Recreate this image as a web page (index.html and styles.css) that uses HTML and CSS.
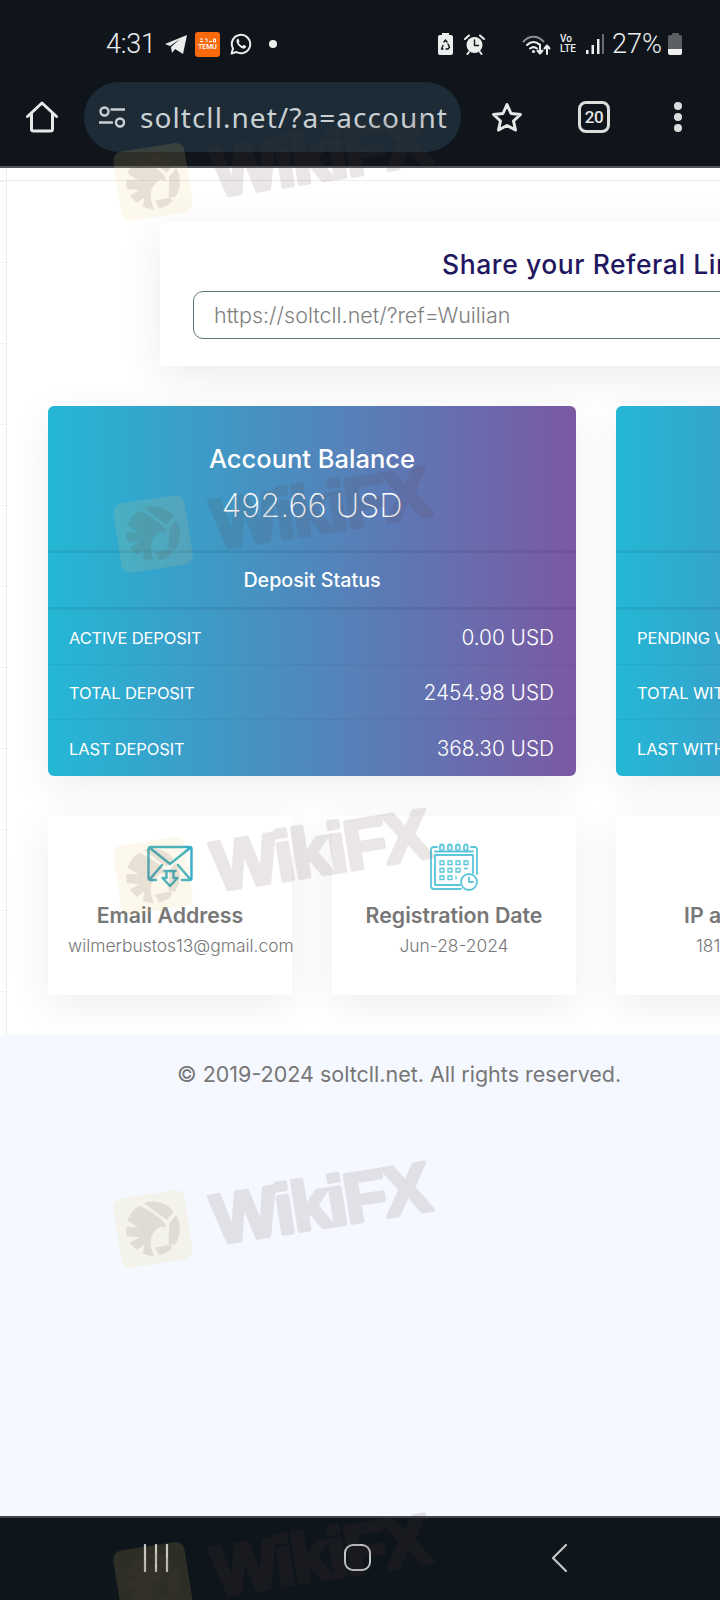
FILE: index.html
```html
<!DOCTYPE html>
<html lang="en">
<head>
<meta charset="utf-8">
<title>soltcll.net account</title>
<link rel="stylesheet" href="styles.css">
</head>
<body>
<div class="screen">
  <header class="chrome">
    <div class="status">
      <span class="time">4:31</span>
      <svg class="ico-telegram" width="22" height="22" viewBox="0 0 22 22"><path class="fill-light" d="M0 11 22 2 18 21 10 16 7 20 6 14 15 6 5 13Z"/></svg>
      <span class="temu"><svg width="17" height="5" viewBox="0 0 17 5"><path class="temu-marks" d="M1 1h3M1 3.500h3M6 1h2v3M10 3.500h3M14.500 1h2v3h-2z"/></svg><span class="temu-word">TEMU</span></span>
      <svg class="ico-whatsapp" width="22" height="22" viewBox="0 0 22 22"><path class="stroke-light" d="M1.500 20.500 3 15.500A9.200 9.200 0 1 1 6.500 19Z"/><path class="fill-light" d="M7.700 5.800c-1.300 1-1.700 2.600-.5 4.800 1.300 2.400 3.300 4.100 5.600 4.900 1.600.5 3-.3 3.400-1.700.1-.4 0-.7-.3-.8l-2-1c-.3-.1-.6 0-.8.200l-.7.900c-1.600-.6-2.900-1.800-3.700-3.300l.6-.7c.2-.3.2-.5.100-.8l-.8-2c-.2-.6-.5-.6-.9-.5Z"/></svg>
      <span class="dot"></span>
      <span class="status-right">
        <svg class="ico-bat-save" width="15" height="22" viewBox="0 0 15 22"><path class="fill-light" d="M4 0h7v2h2a2 2 0 0 1 2 2v16a2 2 0 0 1-2 2H2a2 2 0 0 1-2-2V4a2 2 0 0 1 2-2h2Z"/><path class="stroke-dark" d="M6 9 7.500 7 9 9M10 11 11.500 14 10 16H8M5 16H3.500L5 12.500"/></svg>
        <svg class="ico-alarm" width="21" height="21" viewBox="0 0 21 21"><circle class="fill-light" cx="10.500" cy="11" r="8"/><path class="stroke-light" d="M1 5 5 1.500M20 5 16 1.500M5 18 3.500 20M16 18 17.500 20"/><path class="stroke-dark" d="M10.500 6v5.500h4"/></svg>
        <svg class="ico-wifi" width="30" height="21" viewBox="0 0 30 21"><path class="stroke-dim" d="M1.500 7.500C7 1 16 1 21.500 7.500"/><path class="stroke-light" d="M5 11C9 7 14 7 18 11M8 14.500C10.500 12.500 12.500 12.500 15 14.500"/><circle class="fill-light" cx="11.500" cy="17.500" r="1.600"/><path class="stroke-light" d="M18 10.500V19M15.500 16.500 18 19.500 20.500 16.500M25 20V12M22.500 14.500 25 11.500 27.500 14.500"/></svg>
        <span class="volte"><span>Vo</span><span>LTE</span></span>
        <svg class="ico-signal" width="18" height="20" viewBox="0 0 18 20"><rect class="bar-on" x="0" y="16" width="2.500" height="4"/><rect class="bar-on" x="5.500" y="11" width="2.500" height="9"/><rect class="bar-on" x="11" y="5" width="2.500" height="15"/><rect class="bar-off" x="16" y="0" width="2" height="20"/></svg>
        <span class="pct">27%</span>
        <span class="battery"><span class="battery-cap"></span><span class="battery-empty"></span><span class="battery-full"></span></span>
      </span>
    </div>
    <div class="toolbar">
      <svg class="ico-home" width="32" height="32" viewBox="0 0 32 32"><path class="stroke-tool" d="M1.500 15.500 16 2 30.500 15.500M5.500 12.500V28a2 2 0 0 0 2 2H24.500a2 2 0 0 0 2-2V12.500"/></svg>
      <div class="pill">
        <svg class="ico-tune" width="26" height="22" viewBox="0 0 26 22"><circle class="stroke-url" cx="5.500" cy="5.500" r="4"/><circle class="stroke-url" cx="21" cy="16.500" r="4"/><path class="stroke-url" d="M12.500 3.500H25.500M0.500 16.500H13"/></svg>
        <span class="url">soltcll.net/?a=account</span>
      </div>
      <svg class="ico-star" width="32" height="30" viewBox="0 0 32 30"><path class="stroke-tool" d="M16 2.500 20 11.500 29.500 12.500 22.500 19 24.500 28 16 23.500 7.500 28 9.500 19 2.500 12.500 12 11.500Z"/></svg>
      <span class="tabs">20</span>
      <span class="dots"><span></span><span></span><span></span></span>
    </div>
  </header>

  <main class="frame">
    <section class="share">
      <h2 class="share-title">Share your Referal Link</h2>
      <input class="share-input" type="text" value="https://soltcll.net/?ref=Wuilian" readonly>
    </section>

    <div class="stats">
      <section class="stat">
        <div class="stat-head">
          <h3 class="stat-title">Account Balance</h3>
          <p class="stat-amount">492.66 USD</p>
        </div>
        <h4 class="stat-sub">Deposit Status</h4>
        <div class="stat-row"><span>ACTIVE DEPOSIT</span><b>0.00 USD</b></div>
        <div class="stat-row"><span>TOTAL DEPOSIT</span><b>2454.98 USD</b></div>
        <div class="stat-row"><span>LAST DEPOSIT</span><b>368.30 USD</b></div>
      </section>
      <section class="stat">
        <div class="stat-head">
          <h3 class="stat-title">Total Withdraw</h3>
          <p class="stat-amount">0.00 USD</p>
        </div>
        <h4 class="stat-sub">Withdraw Status</h4>
        <div class="stat-row"><span>PENDING WITHDRAW</span><b>0.00 USD</b></div>
        <div class="stat-row"><span>TOTAL WITHDRAW</span><b>0.00 USD</b></div>
        <div class="stat-row"><span>LAST WITHDRAW</span><b>0.00 USD</b></div>
      </section>
    </div>

    <div class="infos">
      <section class="info">
        <svg class="info-icon" width="46" height="48" viewBox="0 0 46 48"><path class="mail" d="M9 37H3.500a2 2 0 0 1-2-2V6a2 2 0 0 1 2-2H42.500a2 2 0 0 1 2 2V35a2 2 0 0 1-2 2H35M3 5 23 21 43 5M3 36 15 22M43 36 31 22M17.500 28H28.500M19.500 28V35H15.500L23 43 30.500 35H26.500V28"/></svg>
        <h3 class="info-title">Email Address</h3>
        <p class="info-value">wilmerbustos13@gmail.com</p>
      </section>
      <section class="info">
        <svg class="info-icon" width="48" height="48" viewBox="0 0 48 48"><path class="cal" d="M7 4H3.500A2.500 2.500 0 0 0 1 6.500V43a3 3 0 0 0 3 3H31M41 4H44.500A2.500 2.500 0 0 1 47 6.500V31M5 12H43V30M5 12V42H30"/><path class="cal" d="M5 8.500H43"/><rect class="cal" x="10" y="1.500" width="3.600" height="6" rx="1.800"/><rect class="cal" x="18" y="1.500" width="3.600" height="6" rx="1.800"/><rect class="cal" x="26" y="1.500" width="3.600" height="6" rx="1.800"/><rect class="cal" x="34" y="1.500" width="3.600" height="6" rx="1.800"/><path class="cal-thin" d="M10 18h4v3.500h-4zM18 18h4v3.500h-4zM26 18h4v3.500h-4zM34 18h4v3.500h-4zM10 25.500h4v3.500h-4zM18 25.500h4v3.500h-4zM26 25.500h4v3.500h-4zM34 25.500h4M10 33h4v3.500h-4zM18 33h4v3.500h-4zM26 33v3.500"/><circle class="cal" cx="39" cy="39" r="8"/><path class="cal" d="M39 34.500v4.500h4"/></svg>
        <h3 class="info-title">Registration Date</h3>
        <p class="info-value">Jun-28-2024</p>
      </section>
      <section class="info">
        <div class="info-icon"></div>
        <h3 class="info-title">IP address</h3>
        <p class="info-value">181.51.77.2</p>
      </section>
    </div>
  </main>

  <footer class="foot">
    <p class="copy">© 2019-2024 soltcll.net. All rights reserved.</p>
  </footer>

  <nav class="navbar">
    <svg class="ico-recents" width="26" height="28" viewBox="0 0 26 28"><path class="stroke-nav" d="M2 1V27M13 1V27M24 1V27"/></svg>
    <span class="nav-home"></span>
    <svg class="ico-back" width="16" height="28" viewBox="0 0 16 28"><path class="stroke-nav" d="M15 1 2 14 15 27"/></svg>
  </nav>

  <svg class="watermarks" width="720" height="1600" viewBox="0 0 720 1600" aria-hidden="true">
    <defs>
      <g id="wm">
        <rect class="wm-tile" width="72" height="70" rx="9"/>
        <g transform="translate(36 35)">
          <path class="wm-ink" d="M-10-25C-4-21 2-16 6-12 11-8 13-3 13 2 11-1 8-2 5 0-1 3-7 10-4 24L-3 27A27 27 0 0 1-14 23L-11 14-19 18A27 27 0 0 1-25 10L-15 6-27 3A27 27 0 0 1-26-6L-14-4-24-12A27 27 0 0 1-10-25Z"/>
          <path class="wm-ink" d="M-5-27A27 27 0 0 1 23-14L15-7Z"/>
          <path class="wm-ink" d="M25-10A27 27 0 0 1 19 19L13 17 17-3Z"/>
          <path class="wm-ink" d="M-1 19 15 18 16 22A27 27 0 0 1 2 27Z"/>
        </g>
        <text class="wm-word" x="96" y="60">WikiFX</text>
      </g>
    </defs>
    <use href="#wm" transform="translate(112 153) rotate(-9)"/>
    <use href="#wm" transform="translate(112 505) rotate(-9)"/>
    <use href="#wm" transform="translate(112 847) rotate(-9)"/>
    <use href="#wm" transform="translate(112 1200) rotate(-9)"/>
    <use href="#wm" transform="translate(112 1552) rotate(-9)"/>
  </svg>
</div>
</body>
</html>
```

FILE: styles.css
```css
* { box-sizing: border-box; }
html, body { margin: 0; padding: 0; background: #f5f8ff; }
h2, h3, h4, p { margin: 0; }

.screen {
  position: relative;
  width: 720px;
  height: 1600px;
  overflow: hidden;
  display: flex;
  flex-direction: column;
  font-family: Inter, "Open Sans", sans-serif;
}

/* browser chrome */
.chrome {
  flex: none;
  height: 168px;
  background: #10151c;
  border-bottom: 2px solid #50555a;
  font-family: Roboto, sans-serif;
}
.status {
  height: 82px;
  padding: 6px 0 0 106px;
  display: flex;
  align-items: center;
  color: #eceded;
}
.time { font-size: 27px; font-weight: 300; letter-spacing: -.2px; width: 59px; }
.ico-telegram { display: block; }
.temu {
  width: 25px;
  height: 25px;
  margin-left: 8px;
  border-radius: 3px;
  background: #f96a0c;
  display: flex;
  flex-direction: column;
  align-items: center;
  justify-content: center;
  gap: 1px;
}
.temu-marks { fill: none; stroke: #fff; stroke-width: 1; }
.temu-word { font-size: 7px; line-height: 7px; color: #fff; font-weight: 500; }
.ico-whatsapp { margin-left: 10px; }
.dot { width: 8px; height: 8px; border-radius: 50%; background: #eceded; margin-left: 17px; }
.status-right { margin-left: 161px; display: flex; align-items: center; }
.ico-alarm { margin-left: 11px; }
.ico-wifi { margin-left: 37px; }
.volte {
  margin-left: 8px;
  width: 18px;
  display: flex;
  flex-direction: column;
  font-size: 10px;
  line-height: 10px;
  font-weight: 500;
}
.ico-signal { margin-left: 8px; }
.pct { margin-left: 8px; font-size: 27px; font-weight: 300; width: 56px; }
.battery { width: 14px; height: 22px; display: flex; flex-direction: column; align-items: center; }
.battery-cap { width: 7px; height: 2px; background: #5d6063; border-radius: 1px 1px 0 0; }
.battery-empty { width: 14px; height: 14px; background: #5d6063; border-radius: 2px 2px 0 0; }
.battery-full { width: 14px; height: 6px; background: #f0f0f0; border-radius: 0 0 2px 2px; }

.toolbar {
  height: 84px;
  padding: 0 0 14px 26px;
  display: flex;
  align-items: center;
}
.pill {
  width: 377px;
  height: 70px;
  margin-left: 26px;
  padding-left: 15px;
  border-radius: 35px;
  background: #1c2b36;
  display: flex;
  align-items: center;
  gap: 15px;
}
.url {
  font-family: "Noto Sans", sans-serif;
  font-size: 28px;
  letter-spacing: 1.05px;
  line-height: 34px;
  color: #c9cfd3;
  white-space: nowrap;
}
.ico-star { margin-left: 30px; }
.tabs {
  width: 32px;
  height: 32px;
  margin-left: 55px;
  border: 3px solid #dcdede;
  border-radius: 8px;
  color: #e4e6e6;
  font-size: 17px;
  font-weight: 500;
  letter-spacing: -.5px;
  display: flex;
  align-items: center;
  justify-content: center;
}
.dots { margin-left: 64px; display: flex; flex-direction: column; gap: 3px; }
.dots span { width: 8px; height: 8px; border-radius: 50%; background: #dcdede; }

.stroke-light, .stroke-tool, .stroke-dim, .stroke-dark, .stroke-url, .stroke-nav { fill: none; stroke-linecap: round; stroke-linejoin: round; }
.fill-light { fill: #eceded; }
.stroke-light { stroke: #eceded; stroke-width: 2; }
.stroke-dim { stroke: #8a8d90; stroke-width: 2; }
.stroke-dark { stroke: #10151c; stroke-width: 1.400; }
.stroke-tool { stroke: #e6e8e8; stroke-width: 3; }
.stroke-url { stroke: #c9cfd3; stroke-width: 2.400; }
.stroke-nav { stroke: #c4c6c8; stroke-width: 2.200; }
.bar-on { fill: #eceded; }
.bar-off { fill: #6a6d70; }

/* page */
.frame {
  flex: none;
  height: 867px;
  padding: 54px 0 0 48px;
  background-color: #fff;
  background-image:
    linear-gradient(#ececec, #ececec),
    linear-gradient(#ececec, #ececec),
    linear-gradient(#f0f0f0 1px, transparent 1px);
  background-size: 1px 100%, 100% 1px, 6px 81px;
  background-position: 6px 0, 0 12px, 0 13px;
  background-repeat: no-repeat, no-repeat, repeat-y;
  overflow: hidden;
}
.share {
  width: 870px;
  height: 144px;
  margin-left: 112px;
  padding: 24px 33px 0;
  background: #fff;
  box-shadow: 0 10px 40px rgba(0, 0, 0, .08);
}
.share-title {
  text-align: center;
  color: #1f1760;
  font-size: 26.5px;
  letter-spacing: .55px;
  font-weight: 500;
  line-height: 37px;
  margin-bottom: 8px;
}
.share-input {
  display: block;
  width: 100%;
  height: 48px;
  padding: 0 20px;
  border: 1px solid #5f757e;
  border-radius: 10px;
  font-family: inherit;
  font-size: 21.5px;
  font-weight: 300;
  color: #808080;
  background: #fff;
  outline: none;
}

.stats { display: flex; gap: 40px; margin-top: 40px; }
.stat {
  flex: none;
  width: 528px;
  height: 370px;
  border-radius: 6px;
  color: #fff;
  background: linear-gradient(90deg, #24b7d6 0%, #7b58a3 100%);
  box-shadow: 0 10px 40px rgba(0, 0, 0, .07);
  overflow: hidden;
}
.stat-head {
  height: 147px;
  padding-top: 35px;
  text-align: center;
  border-bottom: 3px solid rgba(0, 0, 0, .07);
}
.stat-title { font-size: 25.5px; font-weight: 500; line-height: 36px; }
.stat-amount { font-size: 32.5px; font-weight: 200; line-height: 44px; margin-top: 7px; }
.stat-sub {
  height: 57px;
  border-bottom: 3px solid rgba(0, 0, 0, .07);
  text-align: center;
  font-size: 19.7px;
  font-weight: 500;
  line-height: 54px;
}
.stat-row {
  height: 55px;
  padding: 0 22px 0 21px;
  display: flex;
  align-items: center;
  justify-content: space-between;
  border-bottom: 1px solid rgba(0, 0, 0, .04);
  font-size: 16.5px;
}
.stat-row:last-child { border-bottom: 0; }
.stat-row span { font-weight: 400; padding-top: 2px; letter-spacing: -.15px; }
.stat-row b { font-weight: 300; font-size: 20.8px; padding-top: 1px; }

.infos { display: flex; gap: 40px; margin-top: 40px; }
.info {
  flex: none;
  width: 244px;
  height: 179px;
  padding: 27px 20px 0;
  background: #fff;
  box-shadow: 0 10px 40px rgba(0, 0, 0, .07);
  text-align: center;
  white-space: nowrap;
}
.info-icon { display: block; height: 48px; margin: 0 auto; }
.info-title { margin-top: 9px; color: #777; font-size: 21.3px; font-weight: 600; line-height: 30px; }
.info-value { margin-top: 2px; color: #777; font-size: 17.4px; font-weight: 300; line-height: 28px; }
.mail { fill: none; stroke: #35afc8; stroke-width: 2.400; stroke-linejoin: round; stroke-linecap: round; }
.cal { fill: none; stroke: #5cc5dc; stroke-width: 1.800; stroke-linejoin: round; stroke-linecap: round; }
.cal-thin { fill: none; stroke: #5cc5dc; stroke-width: 1.300; }

.foot { flex: 1; background: #f5f8ff; padding: 23px 0 0 177px; }
.copy { color: #777; font-size: 21.5px; font-weight: 400; line-height: 32px; white-space: nowrap; }

.navbar {
  flex: none;
  height: 84px;
  background: #0f161b;
  border-top: 2px solid #3f454c;
  display: flex;
  align-items: center;
  padding: 0 0 3px 143px;
}
.nav-home {
  width: 27px;
  height: 27px;
  margin-left: 175px;
  border: 2.200px solid #c4c6c8;
  border-radius: 9px;
}
.ico-back { margin-left: 180px; }

/* overlay */
.watermarks { position: absolute; left: 0; top: 0; pointer-events: none; }
.wm-tile { fill: rgba(235, 205, 110, .14); }
.wm-ink { fill: rgba(90, 60, 60, .12); }
.wm-word {
  font-family: "Liberation Sans", sans-serif;
  font-size: 70px;
  letter-spacing: -2.5px;
  font-weight: 700;
  fill: rgb(90, 60, 60);
  stroke: rgb(90, 60, 60);
  stroke-width: 4;
  stroke-linejoin: round;
  opacity: .12;
}
```
